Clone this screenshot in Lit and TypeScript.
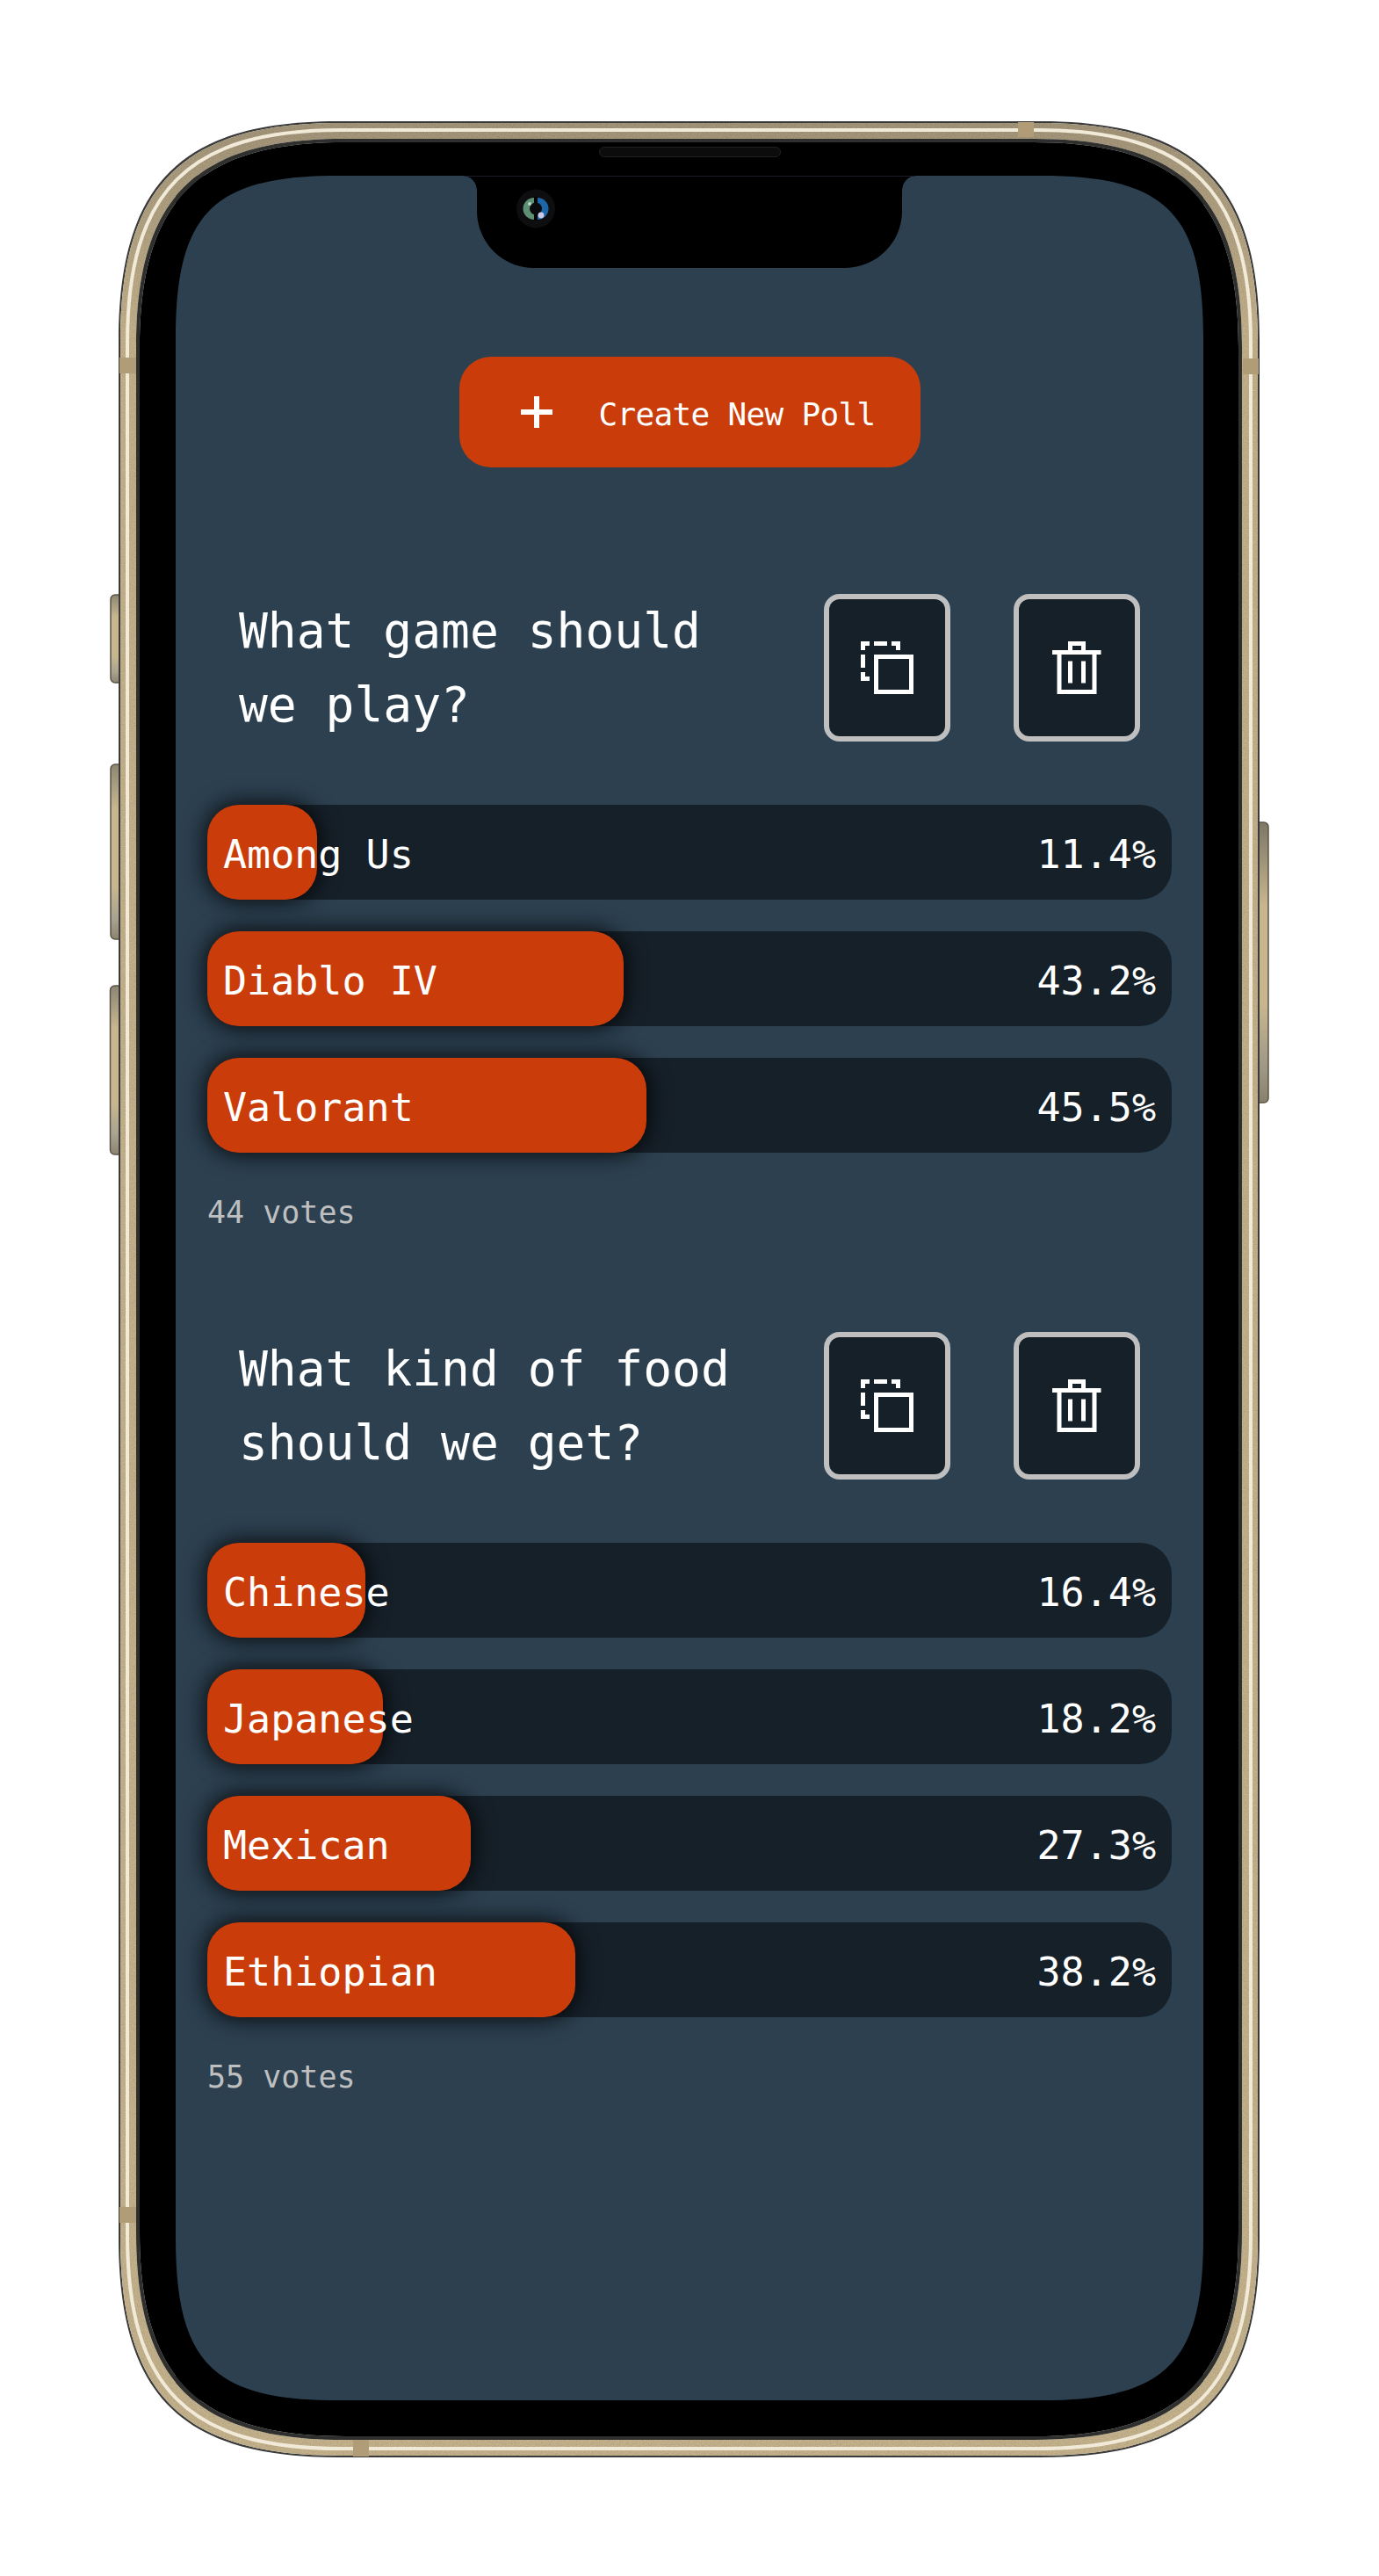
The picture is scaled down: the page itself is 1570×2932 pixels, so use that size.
import { LitElement, html, css, svg } from "lit";
import { customElement } from "lit/decorators.js";

interface Option { label: string; votes: number }
interface Poll { question: string; options: Option[] }

const POLLS: Poll[] = [
  {
    question: "What game should we play?",
    options: [
      { label: "Among Us", votes: 5 },
      { label: "Diablo IV", votes: 19 },
      { label: "Valorant", votes: 20 },
    ],
  },
  {
    question: "What kind of food should we get?",
    options: [
      { label: "Chinese", votes: 9 },
      { label: "Japanese", votes: 10 },
      { label: "Mexican", votes: 15 },
      { label: "Ethiopian", votes: 21 },
    ],
  },
];

function squircle(x0: number, y0: number, x1: number, y1: number, r: number, k: number): string {
  const c = r * (1 - k);
  return (
    `M${x0 + r} ${y0}H${x1 - r}C${x1 - c} ${y0} ${x1} ${y0 + c} ${x1} ${y0 + r}` +
    `V${y1 - r}C${x1} ${y1 - c} ${x1 - c} ${y1} ${x1 - r} ${y1}` +
    `H${x0 + r}C${x0 + c} ${y1} ${x0} ${y1 - c} ${x0} ${y1 - r}` +
    `V${y0 + r}C${x0} ${y0 + c} ${x0 + c} ${y0} ${x0 + r} ${y0}Z`
  );
}

const ring = (i: number) => squircle(135 + i, 138 + i, 1434 - i, 2797 - i, 250 - i * 0.7, 0.715);
const SCREEN = squircle(200, 200, 1370, 2732, 185, 0.77);
const NOTCH =
  "M526 200H1044C1034 200 1027 207 1027 218V240C1027 276 998 305 962 305H608C572 305 543 276 543 240V218C543 207 536 200 526 200Z";

const sideButton = (x: number, y: number, w: number, h: number, id: string) => svg`
  <rect x=${x} y=${y} width=${w} height=${h} rx="5" fill=${`url(#${id})`} stroke="#5a5546" stroke-width="1.5"></rect>`;

const band = (x: number, y: number, w: number, h: number) => svg`
  <rect x=${x} y=${y} width=${w} height=${h} fill="#b09d78"></rect>`;

@customElement("device-frame")
export class DeviceFrame extends LitElement {
  static styles = css`
    :host {
      position: absolute;
      inset: 0;
      display: block;
      pointer-events: none;
    }
    svg {
      display: block;
    }
  `;

  render() {
    return html`
      <svg width="1570" height="2932" viewBox="0 0 1570 2932">
        <defs>
          <linearGradient id="tan" gradientUnits="userSpaceOnUse" x1="0" y1="138" x2="0" y2="2797">
            <stop offset="0" stop-color="#a4967b"></stop>
            <stop offset="0.09" stop-color="#c4b28c"></stop>
            <stop offset="1" stop-color="#c6b48e"></stop>
          </linearGradient>
          <linearGradient id="btnL" x1="0" y1="0" x2="0" y2="1">
            <stop offset="0" stop-color="#8d8674"></stop>
            <stop offset="0.25" stop-color="#c8b68f"></stop>
            <stop offset="0.7" stop-color="#c8b68f"></stop>
            <stop offset="0.88" stop-color="#a9a391"></stop>
            <stop offset="1" stop-color="#8a8470"></stop>
          </linearGradient>
          <linearGradient id="btnR" x1="0" y1="0" x2="0" y2="1">
            <stop offset="0" stop-color="#7d7766"></stop>
            <stop offset="0.3" stop-color="#c8b68f"></stop>
            <stop offset="0.65" stop-color="#c8b68f"></stop>
            <stop offset="0.88" stop-color="#9d9785"></stop>
            <stop offset="1" stop-color="#86806c"></stop>
          </linearGradient>
          <filter id="grain" x="0" y="0" width="100%" height="100%">
            <feTurbulence type="fractalNoise" baseFrequency="0.9" numOctaves="2" seed="4" result="n"></feTurbulence>
            <feColorMatrix in="n" type="matrix"
              values="0 0 0 0 0  0 0 0 0 0  0 0 0 0 0  0.5 0 0 0 -0.17" result="d"></feColorMatrix>
            <feComposite in="d" in2="SourceGraphic" operator="in" result="g"></feComposite>
            <feMerge><feMergeNode in="SourceGraphic"></feMergeNode><feMergeNode in="g"></feMergeNode></feMerge>
          </filter>
        </defs>

        ${sideButton(126, 677, 18, 100, "btnL")}
        ${sideButton(126, 870, 18, 199, "btnL")}
        ${sideButton(125.5, 1122, 18, 192, "btnL")}
        ${sideButton(1426, 936, 18, 319, "btnR")}

        <path d="${ring(0)}${ring(2)}" fill="#3a3a3a" fill-rule="evenodd"></path>
        <path d="${ring(2)}${ring(20)}" fill="url(#tan)" fill-rule="evenodd" filter="url(#grain)"></path>
        <path d=${ring(10)} fill="none" stroke="#f2ead9" stroke-width="4"></path>
        <path d="${ring(20)}${ring(24)}" fill="#2f2f2d" fill-rule="evenodd"></path>
        <path d="${ring(24)}${SCREEN}" fill="#000" fill-rule="evenodd"></path>

        ${band(1159, 139, 18, 17)}
        ${band(136, 407, 19, 18)}
        ${band(1415, 408, 18, 18)}
        ${band(136, 2512, 19, 18)}
        ${band(402, 2777, 18, 19)}

        <path d=${NOTCH} fill="#000"></path>
        <rect x="529" y="200" width="512" height="1" fill="#1d1a2b"></rect>

        <rect x="682.5" y="167.5" width="206" height="11" rx="5.5" fill="#0c0c0c" stroke="#202020"></rect>

        <circle cx="610" cy="237.5" r="22" fill="#0e0e10"></circle>
        <circle cx="610" cy="237.5" r="13.5" fill="#050506"></circle>
        <path d="M608 225A12.5 12.5 0 0 0 608 250Z" fill="#5d8f74"></path>
        <path d="M612 225A12.5 12.5 0 0 1 612 250Z" fill="#1c66a8"></path>
        <circle cx="610" cy="237.5" r="7" fill="#0a0a0c"></circle>
        <circle cx="616" cy="245" r="3.4" fill="#cfc9e6"></circle>
        <circle cx="603" cy="232" r="2" fill="#b9d6c2"></circle>
      </svg>
    `;
  }
}

@customElement("poll-card")
export class PollCard extends LitElement {
  static properties = { poll: { attribute: false } };
  declare poll: Poll;

  static styles = css`
    :host {
      display: block;
    }
    .head {
      display: flex;
      align-items: stretch;
      padding: 0 36px;
      gap: 72px;
    }
    .question {
      flex: 1;
      margin: 0;
      font-weight: 400;
      font-size: 54.6px;
      line-height: 84px;
      color: #fff;
    }
    .icon-btn {
      flex: none;
      width: 144px;
      box-sizing: border-box;
      display: flex;
      align-items: center;
      justify-content: center;
      padding: 0;
      background: #162029;
      border: 6px solid #bfbfbf;
      border-radius: 18px;
    }
    .icon-btn svg {
      display: block;
      fill: #fff;
    }
    .bars {
      display: flex;
      flex-direction: column;
      gap: 36px;
      margin-top: 72px;
    }
    .bar {
      position: relative;
      height: 108px;
      border-radius: 36px;
      background: #162029;
    }
    .fill {
      position: absolute;
      left: 0;
      top: 0;
      bottom: 0;
      border-radius: 36px;
      background: #ca3d0a;
      box-shadow: 0 0 24px 3px rgba(0, 0, 0, 0.8);
    }
    .row {
      position: relative;
      height: 100%;
      display: flex;
      align-items: center;
      justify-content: space-between;
      padding: 4px 18px 0;
      box-sizing: border-box;
      font-size: 45px;
      color: #fff;
    }
    .total {
      margin-top: 41px;
      font-size: 35px;
      line-height: 54px;
      color: #bfbfbf;
    }
  `;

  private copyIcon() {
    return html`<svg width="60" height="60" viewBox="0 0 60 60" shape-rendering="crispEdges">
      <path d="M15 15h45v45H15zM20 20v35h35V20z" fill-rule="evenodd"></path>
      <path d="M0 0h10v5H5v5H0zM15 0h15v5H15zM35 0h10v10h-5V5h-5zM0 15h5v15H0zM0 35h5v5h5v5H0z"></path>
    </svg>`;
  }

  private trashIcon() {
    return html`<svg width="60" height="60" viewBox="0 0 60 60">
      <path d="M2 10h18V0h20v10h17.5v5h-5v45h-45V15H2zM25 5v5h10V5zM12.5 15v40h35V15z" fill-rule="evenodd"></path>
      <path d="M20 22.5h5v25h-5zM35 22.5h5v25h-5z"></path>
    </svg>`;
  }

  render() {
    const total = this.poll.options.reduce((s, o) => s + o.votes, 0);
    return html`
      <div class="head">
        <h2 class="question">${this.poll.question}</h2>
        <button class="icon-btn" aria-label="Duplicate poll">${this.copyIcon()}</button>
        <button class="icon-btn" aria-label="Delete poll">${this.trashIcon()}</button>
      </div>
      <div class="bars">
        ${this.poll.options.map((o) => {
          const pct = ((o.votes / total) * 100).toFixed(1);
          return html`<div class="bar">
            <div class="fill" style="width:${pct}%"></div>
            <div class="row"><span>${o.label}</span><span>${pct}%</span></div>
          </div>`;
        })}
      </div>
      <div class="total">${total} votes</div>
    `;
  }
}

@customElement("app-root")
export class AppRoot extends LitElement {
  static styles = css`
    :host {
      display: block;
      position: relative;
      width: 1570px;
      height: 2932px;
      background: #fff;
      overflow: hidden;
      font-family: "DejaVu Sans Mono", monospace;
    }
    .page {
      padding: 200px;
    }
    .screen {
      height: 2532px;
      box-sizing: border-box;
      padding: 206px 36px 0;
      background: #2c4050;
      display: flex;
      flex-direction: column;
      gap: 109px;
    }
    .create {
      align-self: center;
      display: flex;
      align-items: center;
      gap: 53px;
      width: 525px;
      height: 126px;
      box-sizing: border-box;
      padding: 0 0 0 70px;
      margin-bottom: 35px;
      background: #ca3d0a;
      border: none;
      border-radius: 36px;
      color: #fff;
      font: inherit;
      font-size: 36px;
      letter-spacing: -0.67px;
    }
    .create svg {
      display: block;
      fill: #fff;
      flex: none;
    }
    .create span {
      padding-top: 4px;
    }
  `;

  render() {
    return html`
      <div class="page">
        <div class="screen">
          <button class="create">
            <svg width="36" height="36" viewBox="0 0 36 36"><path d="M15 0h6v15h15v6H21v15h-6V21H0v-6h15z"></path></svg>
            <span>Create New Poll</span>
          </button>
          ${POLLS.map((p) => html`<poll-card .poll=${p}></poll-card>`)}
        </div>
      </div>
      <device-frame></device-frame>
    `;
  }
}
